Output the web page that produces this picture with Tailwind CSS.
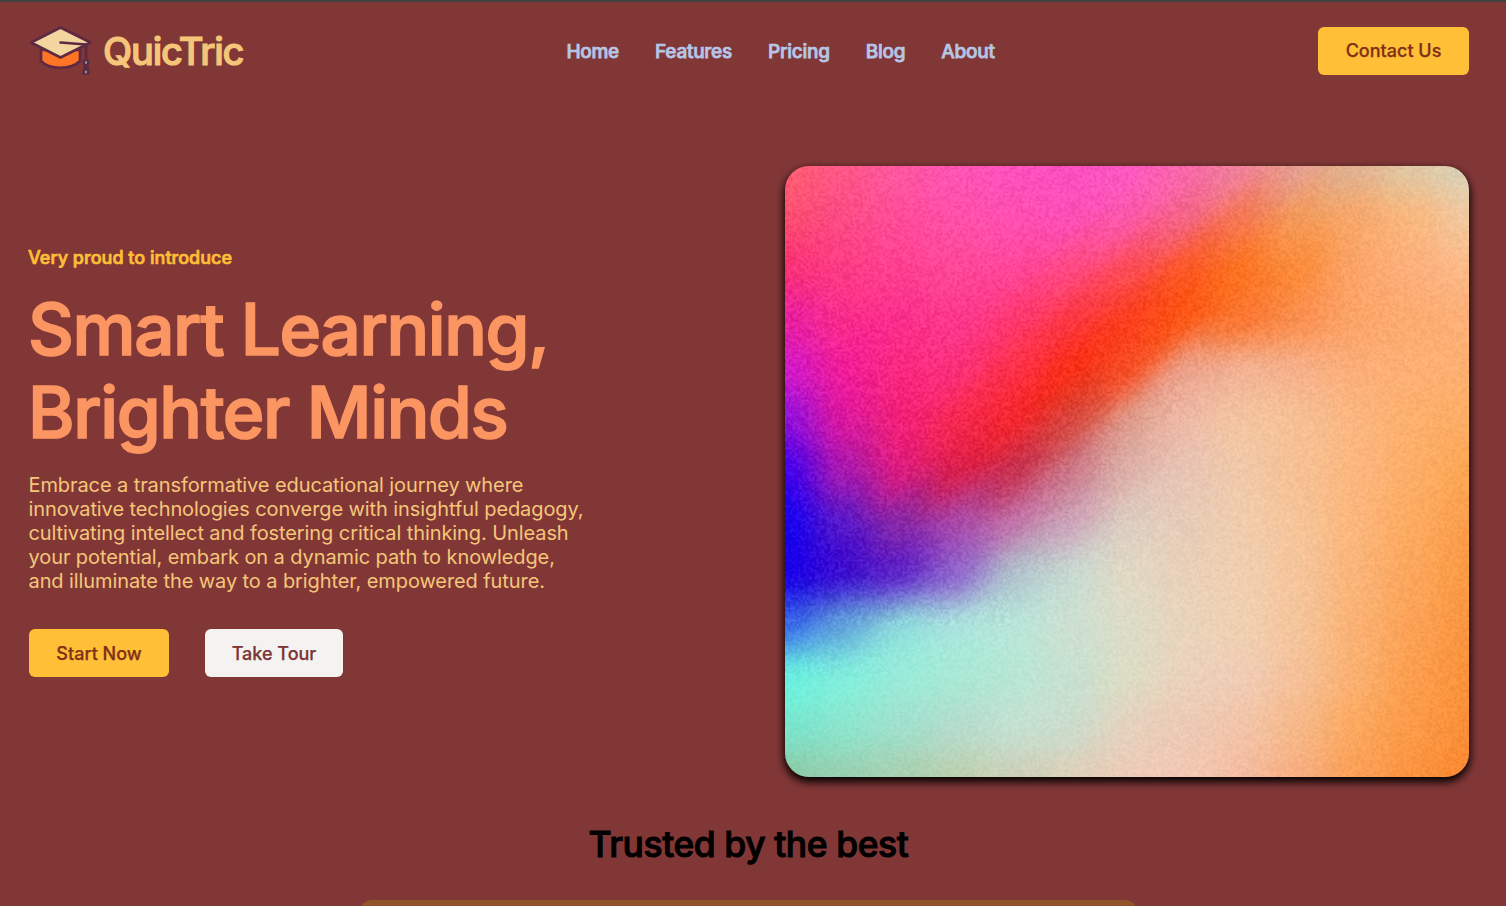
<!DOCTYPE html>
<html lang="en">
<head>
<meta charset="utf-8">
<title>QuicTric</title>
<script src="https://cdn.jsdelivr.net/npm/@tailwindcss/browser@4"></script>
</head>
<body class="h-[906px] overflow-hidden bg-[#823737] border-t-2 border-[#404040] font-['Inter',sans-serif]">
<header class="flex h-[98px] items-center justify-between pl-[29px] pr-[37px]">
  <a class="flex w-[320px] items-center gap-[11px]">
    <svg class="h-[50px] w-[63px]" viewBox="0 0 63 50" fill="none" stroke="#5e2a42" stroke-width="2.7" stroke-linejoin="round" stroke-linecap="round">
      <path d="M12 24V35C20 44 42 44 51 35V24Z" fill="#ff7425"/>
      <path d="M2 16.500L31.500 1.500L61.500 16.500L31.500 31.500Z" fill="#f3d59f"/>
      <path d="M31.500 16.500L57 18.500V36"/>
      <circle cx="57" cy="36.500" r="2.200" fill="#5e2a42"/>
      <path d="M56 40L54.500 47.500H59.500L58 40Z" fill="#5e2a42"/>
      <path d="M57 36V37M57 45.500V46.500" stroke="#8ba5ab" stroke-width="1.800"/>
    </svg>
    <span class="text-[38px] leading-none font-medium tracking-[-1.2px] [-webkit-text-stroke:1.1px] text-[#f5c679]">QuicTric</span>
  </a>
  <nav class="flex gap-9 pt-[2px] text-[19px] font-medium tracking-[-0.25px] [-webkit-text-stroke:0.75px] text-[#b6c7e6]">
    <a>Home</a><a>Features</a><a>Pricing</a><a>Blog</a><a>About</a>
  </nav>
  <div class="flex w-[257px] justify-end"><button class="h-12 w-[151px] rounded-md bg-[#ffbf36] text-lg font-medium [-webkit-text-stroke:0.25px] text-[#7f3018]">Contact Us</button></div>
</header>
<main>
  <section class="flex justify-between pt-[66px] pr-[37px] pl-[29px]">
    <div class="w-[600px] pt-20">
      <p class="-ml-px text-lg leading-6 font-medium tracking-[0.02px] [-webkit-text-stroke:0.7px] text-[#ffbf36]">Very proud to introduce</p>
      <h1 class="-ml-px mt-[18px] text-[71px] leading-[83px] font-medium tracking-[-1.38px] [-webkit-text-stroke:1.7px] text-[#fb9562]">Smart Learning,<br>Brighter Minds</h1>
      <p class="mt-[19px] -ml-[0.5px] text-xl leading-6 tracking-[-0.09px] whitespace-nowrap text-[#f5c679]">Embrace a transformative educational journey where<br>innovative technologies converge with insightful pedagogy,<br>cultivating intellect and fostering critical thinking. Unleash<br>your potential, embark on a dynamic path to knowledge,<br>and illuminate the way to a brighter, empowered future.</p>
      <div class="mt-9 flex gap-9 text-lg font-medium [-webkit-text-stroke:0.25px]">
        <button class="h-12 w-[140px] rounded-md bg-[#ffbf36] pt-0.5 text-[#7f3018]">Start Now</button>
        <button class="h-12 w-[138px] rounded-md bg-[#f5f3f1] pt-0.5 text-[#7c3434]">Take Tour</button>
      </div>
    </div>
    <canvas id="art" width="684" height="611" class="h-[611px] w-[684px] rounded-3xl shadow-[0_4px_8px_1px_#000]"></canvas>
  </section>
  <section class="flex flex-col items-center pr-[9px]">
    <h2 class="mt-[46px] text-[35.5px] leading-[44px] font-medium tracking-[-0.45px] [-webkit-text-stroke:1px] text-black">Trusted by the best</h2>
    <div class="mt-[33px] h-1.5 w-[777px] overflow-hidden"><div class="h-24 rounded-xl bg-[#8f5528]"></div></div>
  </section>
</main>
<script>
const mesh = `
fc5c70 ff5888 ff58a0 ff55b4 fd50bc fb50c0 fb58c0 f968ac f0829c e59f90 e0b290 e0c8a4 d8d0b8
fb4c70 fb4b84 ff4c98 ff50a8 ff4fb0 fc4fb4 fb58a8 f46484 f47854 f49a5c f6a86c f8b880 f0c8a0
f93078 fc3c84 fe4090 fe4898 ff4698 ff4a84 fb4c58 fb5828 fc7424 fb8c3c fba468 fcb07c fbba88
e820a0 f82c8c fb308c fc388c fe3870 fc3844 fb4020 fb5818 fa7834 fa9050 fba468 fcac70 fcb078
d018c8 ee1c98 f82880 fa3078 fb3048 f73018 f65028 eda088 f2b090 f6b088 fbae78 fcb074 fdb070
9010dc d818a0 f02078 f42850 f22830 d84840 de9888 ecb8a4 f3c4a0 f6bf94 fbb680 fcb06c fcac64
4000ec a418b0 d81c80 d82050 c83454 cc7888 dcb0a8 e8c4b4 f0c8a8 f6c094 fbb67e fcae68 fca654
1800f0 5818c8 8828a8 a848a8 c074a8 cca4b8 dcccc0 e6ccb8 f0ccac f6c498 fbb67c fcaa60 fb9e4c
1800e8 3c10d0 6028c8 9068cc b0c0cc c8d8d0 e0d8c4 e8d0b8 f0ceb0 f5c49a fab478 fba65c fa9a44
3868e8 60a0dc 8cd4dc a8e0dc b8e4d8 ccdfd0 dcdcc8 e8d4bc f0d0b0 f5c49a fab274 fba256 fa9640
68ece0 80ecdc 98ead8 a8e8d4 b8e6d4 c8e0d0 dcdcc4 ead2bc f0ccb4 f5c098 fab070 fb9e4e fa923c
78e4cc 8ce4cc a0e0cc b4dccc c4e0d0 ccdccc e4d2be eccab4 f2c4a8 f6b888 fba860 fb9a48 fa8e38
8ccca8 98d0b0 a8d0b0 bcd0b0 ccd0b8 dccfb8 ecccb8 f2c8b4 f4bca0 f8ae80 fba058 fb9440 fa8830`
  .trim().split('\n').map(r => r.split(' ').map(c => [0, 2, 4].map(k => parseInt(c.slice(k, k + 2), 16))));
const W = 684, H = 611, ctx = document.getElementById('art').getContext('2d');
const img = ctx.createImageData(W, H);
const cl = i => Math.max(0, Math.min(12, i));
const cubic = (a, b, c, d, t) => b + .3 * t * (c - a + t * (2 * a - 5 * b + 4 * c - d + t * (3 * (b - c) + d - a))) + .4 * (c - b) * t * t * (3 - 2 * t);
const step = (a, b, x) => { const t = Math.max(0, Math.min(1, (x - a) / (b - a))); return t * t * (3 - 2 * t); };
// Slope of the colour bands at a point of the mesh: rows risen per column.
const slope = (u, v) => (.7 - .4 * step(6, 8.5, v)) * (1 - step(6.5, 9, u) * step(2, 3.5, v)) * Math.max(step(0, 1.5, u), step(6, 8, v)) * (1 - step(9, 12, u));
// Each column is interpolated separately, at the height where the band crosses it.
const column = (i, v, k) => {
  const j = Math.floor(v);
  return cubic(...[-1, 0, 1, 2].map(d => mesh[cl(j + d)][cl(i)][k]), v - j);
};
let seed = 7;
const rnd = () => (seed = (seed * 1664525 + 1013904223) >>> 0) / 4294967296 - .5;
const GW = 344, grain = Array.from({ length: GW * 308 }, rnd);
for (let y = 0; y < H; y++) for (let x = 0; x < W; x++) {
  const u = x / W * 12, v = y / H * 12, i = Math.floor(u), m = slope(u, v);
  const gx = x >> 1, gy = y >> 1, fx = x % 2 / 2, fy = y % 2 / 2, g = gy * GW + gx;
  const n = (grain[g] * (1 - fx) + grain[g + 1] * fx) * (1 - fy) + (grain[g + GW] * (1 - fx) + grain[g + GW + 1] * fx) * fy;
  const p = (y * W + x) * 4;
  for (let k = 0; k < 3; k++) {
    const c = cubic(...[-1, 0, 1, 2].map(d => column(i + d, v + m * (u - i - d), k)), u - i);
    img.data[p + k] = c + n * (8 + 20 * (1 - mesh[Math.floor(v)][i][1] / 255));
  }
  img.data[p + 3] = 255;
}
ctx.putImageData(img, 0, 0);
</script>
</body>
</html>
